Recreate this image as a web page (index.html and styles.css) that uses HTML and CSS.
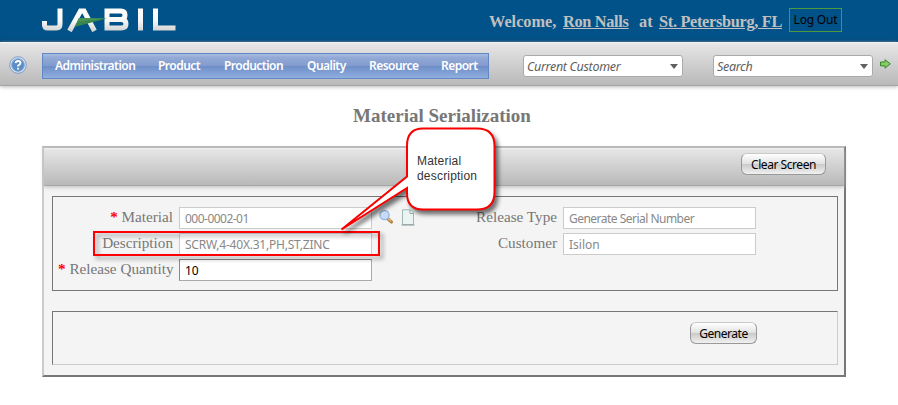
FILE: index.html
```html
<!DOCTYPE html>
<html lang="en">
<head>
<meta charset="utf-8">
<title>Material Serialization</title>
<link rel="stylesheet" href="styles.css">
</head>
<body>
<header class="banner">
  <svg class="logo" width="134" height="24" viewBox="0 0 134 24" role="img" aria-label="Jabil">
    <defs><linearGradient id="silver" x1="0" y1="0" x2="0" y2="24" gradientUnits="userSpaceOnUse"><stop offset="0" stop-color="#fff"/><stop offset=".55" stop-color="#f6f6f6"/><stop offset="1" stop-color="#cfcfcf"/></linearGradient></defs>
    <g fill="none" stroke="url(#silver)" stroke-width="5">
      <path d="M18 .5V16Q18 20 14.500 20H6Q2.500 20 2.500 17V13"/>
      <path d="M27.500 23L38.500 3H42L52.500 23"/>
      <path d="M65 3H79Q83 3 83 7Q83 11.500 79 11.500H65M79 11.500Q84 11.500 84 16Q84 20 79 20H65V.5"/>
      <path d="M98.500 .5V22.500M113.500 .5V20H133.500"/>
    </g>
    <path d="M37 10L64.500 10.500L32.500 19Z" fill="#38854f"/>
    <path d="M37 10L64.500 10.500L35 14Z" fill="#479455"/>
  </svg>
  <div class="welcome"><span>Welcome,</span><a>Ron Nalls</a><span>at</span><a>St. Petersburg, FL</a></div>
  <button class="logout">Log Out</button>
</header>
<div class="toolbar">
  <svg class="help" width="18" height="18" viewBox="0 0 18 18">
    <circle cx="9" cy="9" r="8.300" fill="#d9e7f6" stroke="#7d9cc5"/>
    <circle cx="9" cy="9" r="6.300" fill="#5d8dc7" stroke="#7fa6d5"/>
    <path d="M6.600 7.200Q6.800 5 9 5Q11.500 5 11.500 7Q11.500 8.300 9.100 9.700V10.600M9.100 11.800V13.600" fill="none" stroke="#fff" stroke-width="1.900"/>
  </svg>
  <nav class="menu"><a>Administration</a><a>Product</a><a>Production</a><a>Quality</a><a>Resource</a><a>Report</a></nav>
  <div class="combo customer"><span>Current Customer</span><i></i></div>
  <div class="combo search"><span>Search</span><i></i></div>
  <svg class="go" width="11" height="10" viewBox="0 0 11 10"><path d="M.5 3H5V.7L10.300 4.800L5 9.200V6.800H.5Z" fill="#8ccb63" stroke="#32882c"/></svg>
</div>
<main>
  <h1>Material Serialization</h1>
  <section class="panel">
    <div class="panel-head"><button class="btn clear">Clear Screen</button></div>
    <div class="fields">
      <label><b>*</b> Material</label><div class="input tight"><span>000-0002-01</span></div>
      <div class="icons">
        <svg width="15" height="16" viewBox="0 0 15 16"><path d="M8.500 9.500L12.500 13" stroke="#b68647" stroke-width="3.200" stroke-linecap="round"/><path d="M9 9.500L12 12" stroke="#eebd78" stroke-width="1.200"/><circle cx="5.500" cy="6" r="4.600" fill="#c5dcfa" stroke="#94b4df" stroke-width="1.300"/><path d="M3 6Q3 3.500 5.800 3.300" stroke="#f4f9ff" fill="none"/></svg>
        <svg width="14" height="17" viewBox="0 0 14 17"><path d="M1.500 .8H9.500L12.500 4V15.600H1.500Z" fill="#eaf5f3" stroke="#a1b7b5"/><path d="M9 1V4.500H12.500" fill="#fff" stroke="#93a9a8"/><path d="M.5 16H13.500" stroke="#8b9c9a"/></svg>
      </div>
      <label>Release Type</label><div class="input tight"><span>Generate Serial Number</span></div>
      <label>Description</label><div class="input snug"><span>SCRW,4-40X.31,PH,ST,ZINC</span></div>
      <span></span>
      <label>Customer</label><div class="input"><span>Isilon</span></div>
      <label><b>*</b> Release Quantity</label><div class="input qty"><span>10</span></div>
    </div>
    <div class="actions"><button class="btn generate">Generate</button></div>
  </section>
</main>
<div class="mark"></div>
<div class="callout">
  <svg width="164" height="114" viewBox="0 0 164 114"><path d="M88 1.500H138Q155.500 1.500 155.500 19V65Q155.500 82.500 138 82.500H84Q68 82.500 68 66V61L2.500 102.500L68 49.500V19Q68 1.500 84 1.500Z" fill="#fff" stroke="#fa0000" stroke-width="2"/></svg>
  <p>Material<br>description</p>
</div>
</body>
</html>
```
FILE: styles.css
```css
* { box-sizing: border-box; }
body { margin: 0; width: 898px; height: 405px; overflow: hidden; background: #fff; font-family: "Noto Sans", sans-serif; }
button { font: inherit; margin: 0; padding: 0; white-space: nowrap; }
a, span, label { white-space: nowrap; }

.banner { display: flex; height: 42px; background: linear-gradient(#005288 88%, #00467a); }
.logo { margin: 8px 0 0 42px; flex: none; }
.welcome { display: grid; grid-template-columns: 74px 76px 20px 123px; justify-items: start; align-items: start; width: 293px; height: 20px; margin: 12px 0 0 313px; font: bold 16.3px/20px "Liberation Serif", serif; letter-spacing: -.3px; color: #c0c0c0; }
.welcome a { text-decoration: underline; }
.welcome span { letter-spacing: 0; }
.logout { width: 53px; height: 24px; margin: 8px 0 0 7px; background: none; border: 1px solid #4c9a3d; color: #000; font-size: 12px; line-height: 20px; letter-spacing: -.2px; }

.toolbar { display: flex; height: 44px; background: linear-gradient(#f5f5f5 0, #e5e5e5 2px, #b9b9b9 43px, #a3a3a3 43px); box-shadow: 0 1px 4px #bbb; }
.help { margin: 14px 15px 0 9px; flex: none; }
.menu { display: grid; grid-template-columns: 103px 66px 83px 62px 72px 40px; width: 447px; height: 26px; margin-top: 11px; padding-left: 12px; flex: none; border: 1px solid #6387c4; background: linear-gradient(#a7bce0 0, #93aad6 15%, #829bcd 49%, #6d8dc8 50%, #8fafdf 100%); color: #fff; font: 600 12px/24px "Noto Sans", sans-serif; letter-spacing: -.52px; }
.combo { display: flex; align-items: center; justify-content: space-between; flex: none; width: 160px; height: 22px; margin-top: 13px; padding: 0 4px 0 3px; border: 1px solid #aaa; border-radius: 3px; background: #fff; color: #606060; font-size: 12.5px; font-style: italic; letter-spacing: -.32px; }
.combo i { border: solid transparent; border-width: 5px 4px 0; border-top-color: #606060; }
.customer { margin-left: 34px; }
.search { margin-left: 30px; }
.go { margin: 17px 0 0 7px; flex: none; }

h1 { width: 800px; margin: 19px 0 0 42px; text-align: center; color: #777; font: bold 19px/22px "Liberation Serif", serif; }
.panel { width: 804px; height: 231px; margin: 19px 0 0 42px; border: 2px solid; border-color: #b9b9b9 #777 #777 #cbcbcb; background: #f4f4f4; }
.panel-head { display: flex; justify-content: flex-end; height: 38px; padding: 5px 18px 0 0; border-bottom: 1px solid #a7a7a7; background: linear-gradient(#f3f3f3 0, #e5e5e5 2px, #b9b9b9); box-shadow: 0 1px 4px #bbb; }
.btn { height: 22px; border: 1px solid #999; border-top-color: #c9c9c9; border-radius: 6px; background: linear-gradient(#fff, #e2e2e2 48%, #cacaca 52%, #f1f1f1); color: #000; font-size: 12px; line-height: 21px; letter-spacing: -.45px; }
.clear { width: 85px; }
.generate { width: 67px; }
.fields { display: grid; grid-template-columns: 121px 193px 38px 153px 193px; grid-auto-rows: 22px; gap: 4px 0; width: 786px; height: 95px; margin: 10px 0 0 8px; padding: 10px 0 0 5px; border: 1px solid #777; }
.fields label { padding-right: 6px; color: #777; font: 15.2px/20px "Liberation Serif", serif; text-align: right; }
.fields label b { color: #f00; }
.input { display: flex; align-items: center; padding-left: 5px; border: 1px solid #ccc; background: #fff; color: #888; font-size: 12px; }
.tight { letter-spacing: -.52px; }
.snug { letter-spacing: -.22px; }
.qty { border-color: #888 #aaa #aaa #888; color: #000; }
.icons { display: flex; gap: 7px; padding: 2px 0 0 7px; }
.icons svg { flex: none; }
.actions { display: flex; justify-content: flex-end; width: 786px; height: 54px; margin: 20px 0 0 8px; padding: 10px 80px 0 0; border: 1px solid; border-color: #777 #ccc #ccc #777; }

.mark { position: absolute; left: 93px; top: 231px; width: 287px; height: 25px; border: 2px solid #f00; filter: drop-shadow(3px 3px 2px rgba(0,0,0,.4)); }
.callout { position: absolute; left: 339px; top: 127px; width: 164px; height: 114px; }
.callout svg { display: block; overflow: visible; filter: drop-shadow(3px 4px 2px rgba(0,0,0,.55)); }
.callout p { position: absolute; left: 78px; top: 27px; margin: 0; color: #333; font: 12px/15px "Liberation Sans", sans-serif; letter-spacing: .2px; }
```
